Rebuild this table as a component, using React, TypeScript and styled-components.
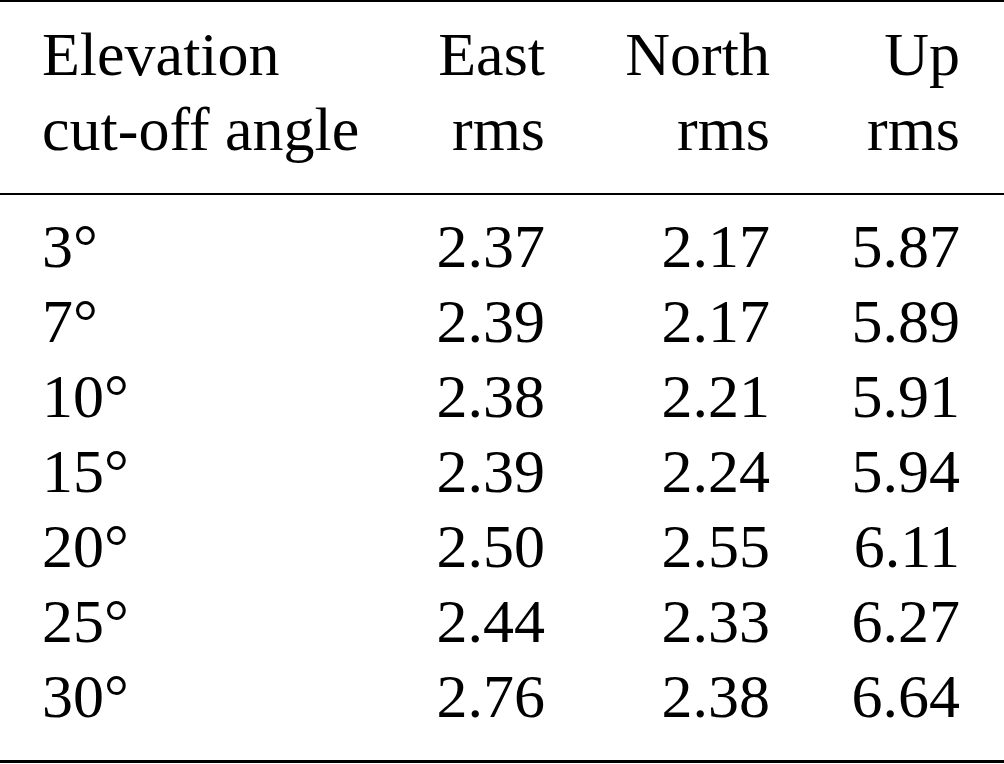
import React from "react";
import styled, { createGlobalStyle } from "styled-components";

const Global = createGlobalStyle`
  html, body { margin: 0; padding: 0; background: #fff; }
  body { font-family: "Liberation Serif", "Times New Roman", serif; color: #000; }
`;

const Table = styled.div`
  width: 1004px;
  border-top: 2px solid #000;
  border-bottom: 3px solid #000;
  box-sizing: border-box;
  margin-top: 0;
`;

const Section = styled.div<{ $head?: boolean }>`
  display: grid;
  grid-template-columns: 1fr 160px 225px 190px;
  padding: ${(p) => (p.$head ? "15px 44px 26px 42px" : "14px 44px 26px 42px")};
  border-bottom: ${(p) => (p.$head ? "2px solid #000" : "none")};
  font-size: 62px;
  line-height: 75px;
`;

const Cell = styled.div<{ $right?: boolean }>`
  text-align: ${(p) => (p.$right ? "right" : "left")};
  white-space: nowrap;
`;

const rows = [
  ["3°", "2.37", "2.17", "5.87"],
  ["7°", "2.39", "2.17", "5.89"],
  ["10°", "2.38", "2.21", "5.91"],
  ["15°", "2.39", "2.24", "5.94"],
  ["20°", "2.50", "2.55", "6.11"],
  ["25°", "2.44", "2.33", "6.27"],
  ["30°", "2.76", "2.38", "6.64"],
];

export default function App() {
  return (
    <>
      <Global />
      <Table>
        <Section $head>
          <Cell>Elevation<br />cut-off angle</Cell>
          <Cell $right>East<br />rms</Cell>
          <Cell $right>North<br />rms</Cell>
          <Cell $right>Up<br />rms</Cell>
        </Section>
        <Section>
          {rows.map((r) =>
            r.map((v, i) => (
              <Cell key={r[0] + i} $right={i > 0}>
                {v}
              </Cell>
            ))
          )}
        </Section>
      </Table>
    </>
  );
}
